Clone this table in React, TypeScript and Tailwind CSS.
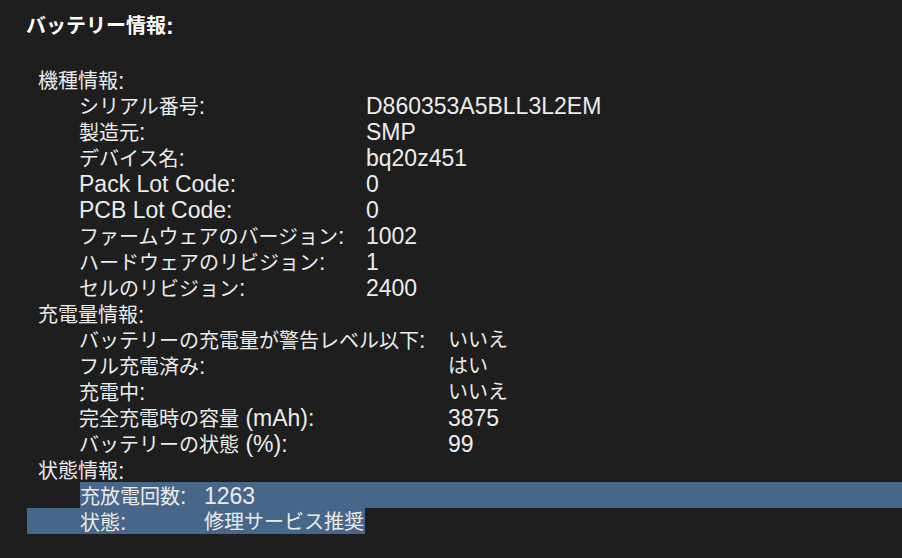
import React from "react";

const CJK = /([\u3000-\u30ff\u3400-\u9fff\uff00-\uffef]+)/;

function T({ s }: { s: string }) {
  const parts = s.split(CJK).filter((p) => p.length > 0);
  return (
    <>
      {parts.map((p, i) =>
        CJK.test(p) ? (
          <span key={i} className="text-[20px] leading-[26px]">
            {p}
          </span>
        ) : (
          <span key={i} className="text-[23px] leading-[26px] whitespace-pre">
            {p}
          </span>
        )
      )}
    </>
  );
}

function Header({ s }: { s: string }) {
  return (
    <div className="h-[26px] pt-[3px] flex items-center pl-[38px] whitespace-nowrap">
      <T s={s} />
    </div>
  );
}

function Row({ label, value, w }: { label: string; value: string; w: string }) {
  return (
    <div className="h-[26px] pt-[3px] flex items-center pl-[79px] whitespace-nowrap">
      <div className={w}>
        <T s={label} />
      </div>
      <div>
        <T s={value} />
      </div>
    </div>
  );
}

export default function App() {
  const s1: [string, string][] = [
    ["シリアル番号:", "D860353A5BLL3L2EM"],
    ["製造元:", "SMP"],
    ["デバイス名:", "bq20z451"],
    ["Pack Lot Code:", "0"],
    ["PCB Lot Code:", "0"],
    ["ファームウェアのバージョン:", "1002"],
    ["ハードウェアのリビジョン:", "1"],
    ["セルのリビジョン:", "2400"],
  ];
  const s2: [string, string][] = [
    ["バッテリーの充電量が警告レベル以下:", "いいえ"],
    ["フル充電済み:", "はい"],
    ["充電中:", "いいえ"],
    ["完全充電時の容量 (mAh):", "3875"],
    ["バッテリーの状態 (%):", "99"],
  ];
  return (
    <div className="w-[902px] h-[558px] overflow-hidden bg-[#1e1e1e] text-[#ececec] font-['Liberation_Sans','Noto_Sans_CJK_JP',sans-serif] pt-[13px]">
      <div className="h-[26px] flex items-center pl-[26px] font-bold text-white whitespace-nowrap">
        <T s="バッテリー情報:" />
      </div>
      <div className="mt-[27px]">
        <Header s="機種情報:" />
        {s1.map(([l, v]) => (
          <Row key={l} label={l} value={v} w="w-[287px]" />
        ))}
        <Header s="充電量情報:" />
        {s2.map(([l, v]) => (
          <Row key={l} label={l} value={v} w="w-[369px]" />
        ))}
        <Header s="状態情報:" />
        <div className="h-[26px] flex whitespace-nowrap">
          <div className="w-[80px] shrink-0" />
          <div className="flex-1 pt-[3px] flex items-center bg-[#46668a]">
            <div className="w-[124px]">
              <T s="充放電回数:" />
            </div>
            <div>
              <T s="1263" />
            </div>
          </div>
        </div>
        <div className="h-[26px] flex whitespace-nowrap">
          <div className="w-[27px] shrink-0" />
          <div className="w-[338px] pt-[3px] flex items-center bg-[#46668a]">
            <div className="w-[53px] shrink-0" />
            <div className="w-[124px]">
              <T s="状態:" />
            </div>
            <div>
              <T s="修理サービス推奨" />
            </div>
          </div>
        </div>
      </div>
    </div>
  );
}
